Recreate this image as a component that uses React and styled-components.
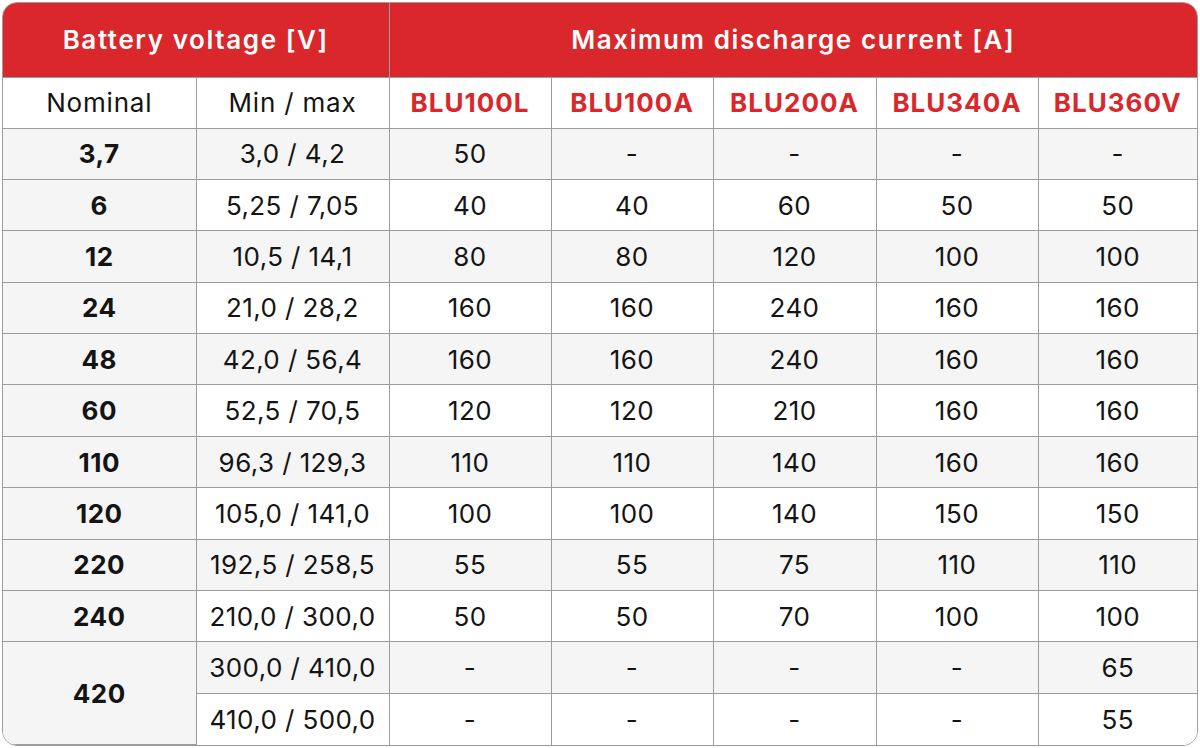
import React from "react";
import styled, { createGlobalStyle } from "styled-components";

const GlobalStyle = createGlobalStyle`
  html, body {
    margin: 0;
    padding: 0;
    background: #ffffff;
  }
  body {
    padding: 2px;
    font-family: Inter, "Open Sans", "Liberation Sans", sans-serif;
  }
`;

const models = ["BLU100L", "BLU100A", "BLU200A", "BLU340A", "BLU360V"];

const rows = [
  { nominal: "3,7", range: "3,0 / 4,2", values: ["50", "-", "-", "-", "-"] },
  { nominal: "6", range: "5,25 / 7,05", values: ["40", "40", "60", "50", "50"] },
  { nominal: "12", range: "10,5 / 14,1", values: ["80", "80", "120", "100", "100"] },
  { nominal: "24", range: "21,0 / 28,2", values: ["160", "160", "240", "160", "160"] },
  { nominal: "48", range: "42,0 / 56,4", values: ["160", "160", "240", "160", "160"] },
  { nominal: "60", range: "52,5 / 70,5", values: ["120", "120", "210", "160", "160"] },
  { nominal: "110", range: "96,3 / 129,3", values: ["110", "110", "140", "160", "160"] },
  { nominal: "120", range: "105,0 / 141,0", values: ["100", "100", "140", "150", "150"] },
  { nominal: "220", range: "192,5 / 258,5", values: ["55", "55", "75", "110", "110"] },
  { nominal: "240", range: "210,0 / 300,0", values: ["50", "50", "70", "100", "100"] },
  { nominal: "420", span: 2, range: "300,0 / 410,0", values: ["-", "-", "-", "-", "65"] },
  { range: "410,0 / 500,0", values: ["-", "-", "-", "-", "55"] },
];

function App() {
  return (
    <>
      <GlobalStyle />
      <Wrapper>
        <Table>
          <colgroup>
            <col style={{ width: 193 }} />
            <col style={{ width: 193 }} />
            <col style={{ width: 162 }} />
            <col style={{ width: 162 }} />
            <col style={{ width: 163 }} />
            <col style={{ width: 162 }} />
            <col />
          </colgroup>
          <thead>
            <TopRow>
              <GroupHead colSpan={2}>Battery voltage [V]</GroupHead>
              <GroupHead colSpan={5}>Maximum discharge current [A]</GroupHead>
            </TopRow>
            <SubRow>
              <SubHead>Nominal</SubHead>
              <SubHead>Min / max</SubHead>
              {models.map((m) => (
                <ModelHead key={m}>{m}</ModelHead>
              ))}
            </SubRow>
          </thead>
          <tbody>
            {rows.map((r, i) => (
              <DataRow key={i}>
                {r.nominal && (
                  <NominalCell rowSpan={r.span || 1}>{r.nominal}</NominalCell>
                )}
                <Cell $shade={i % 2 === 0}>{r.range}</Cell>
                {r.values.map((v, j) => (
                  <Cell key={j} $shade={i % 2 === 0}>
                    {v}
                  </Cell>
                ))}
              </DataRow>
            ))}
          </tbody>
        </Table>
      </Wrapper>
    </>
  );
}

const Wrapper = styled.div`
  width: 1196px;
  box-sizing: border-box;
  border: 1.5px solid #9c9c9c;
  border-radius: 15px;
  overflow: hidden;
`;

const Table = styled.table`
  width: 100%;
  border-collapse: collapse;
  table-layout: fixed;
  color: #141414;

  td, th {
    border: 1.5px solid #9c9c9c;
    text-align: center;
    vertical-align: middle;
    padding: 0;
    white-space: nowrap;
  }
  tr:first-child > th {
    border-top: none;
  }
  tr > :first-child {
    border-left: none;
  }
  tr > :last-child {
    border-right: none;
  }
  tbody tr:last-child > td {
    border-bottom: none;
  }
`;

const TopRow = styled.tr`
  height: 74px;
  background: #d9272b;
`;

const GroupHead = styled.th`
  color: #ffffff;
  font-size: 26px;
  font-weight: 600;
  letter-spacing: 1.6px;
`;

const SubRow = styled.tr`
  height: 51px;
  background: #ffffff;
`;

const SubHead = styled.th`
  font-size: 26px;
  font-weight: 400;
  letter-spacing: 0.8px;
  color: #141414;
`;

const ModelHead = styled.th`
  font-size: 26px;
  font-weight: 700;
  letter-spacing: 1px;
  color: #d9272b;
`;

const DataRow = styled.tr`
  height: 51.4px;
`;

const NominalCell = styled.td`
  background: #f5f5f5;
  font-size: 26px;
  font-weight: 700;
  letter-spacing: 0.5px;
`;

const Cell = styled.td`
  background: ${(p) => (p.$shade ? "#f5f5f5" : "#ffffff")};
  font-size: 26px;
  font-weight: 400;
  letter-spacing: 0.4px;
`;

export default App;
